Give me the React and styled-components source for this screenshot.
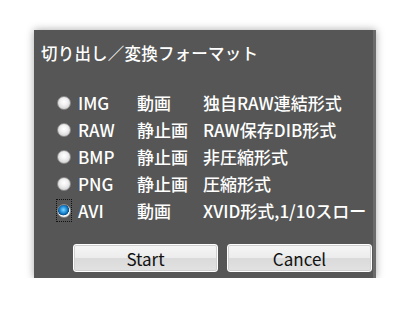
import React, { useState } from 'react';
import styled, { createGlobalStyle } from 'styled-components';

const GlobalStyle = createGlobalStyle`
  body {
    margin: 0;
    background: #ffffff;
    font-family: "Noto Sans CJK JP", "Noto Sans", sans-serif;
  }
`;

const Panel = styled.div`
  margin: 30px 0 0 34px;
  width: 342px;
  height: 248px;
  box-sizing: border-box;
  background: #555655;
  border-right: 3px solid #6a6b6a;
  box-shadow: 0 0 8px rgba(0, 0, 0, 0.35);
  padding: 13px 0 0 7px;
  display: flex;
  flex-direction: column;
`;

const Title = styled.div`
  color: #ffffff;
  font-size: 16.5px;
  font-weight: 500;
  line-height: 20px;
  letter-spacing: 0.2px;
  margin-bottom: 26px;
`;

const List = styled.div`
  display: flex;
  flex-direction: column;
  padding-left: 15px;
`;

const Row = styled.label`
  display: grid;
  grid-template-columns: 22px 59px 66px auto;
  align-items: center;
  height: 27px;
  color: #ffffff;
  font-size: 17px;
  font-weight: 500;
  white-space: nowrap;
  cursor: pointer;
`;

const RadioWrap = styled.span`
  width: 16px;
  height: 23px;
  display: flex;
  align-items: center;
  justify-content: center;
  box-sizing: border-box;
  border: 1px dotted ${p => (p.$focus ? '#111' : 'transparent')};
`;

const RadioDot = styled.span`
  flex: none;
  width: 14px;
  height: 14px;
  border-radius: 50%;
  box-sizing: border-box;
  border: 1px solid #8c8c8c;
  background: ${p =>
    p.$checked
      ? 'radial-gradient(circle at 45% 40%, #7fd6ff 0%, #1b8ad6 35%, #0a4f8a 55%, #ffffff 60%, #d8d8d8 100%)'
      : 'radial-gradient(circle at 50% 40%, #ffffff 0%, #f2f2f2 35%, #c4c4c4 100%)'};
`;

const Cell = styled.span``;

const ButtonBar = styled.div`
  margin-top: auto;
  margin-bottom: 6px;
  display: flex;
  gap: 9px;
  padding-left: 32px;
`;

const Button = styled.button`
  width: 145px;
  height: 28px;
  border: 1px solid #ffffff;
  border-radius: 3px;
  background: linear-gradient(to bottom, #f6f6f6 0%, #ececec 50%, #dadada 52%, #e2e2e2 100%);
  box-shadow: inset 0 0 0 1px #cfcfcf;
  color: #111111;
  font-family: "Noto Sans CJK JP", "Noto Sans", sans-serif;
  font-size: 17px;
  padding: 0;
  cursor: pointer;
`;

const formats = [
  { id: 'IMG', kind: '動画', desc: '独自RAW連結形式' },
  { id: 'RAW', kind: '静止画', desc: 'RAW保存DIB形式' },
  { id: 'BMP', kind: '静止画', desc: '非圧縮形式' },
  { id: 'PNG', kind: '静止画', desc: '圧縮形式' },
  { id: 'AVI', kind: '動画', desc: 'XVID形式,1/10スロー' },
];

export default function App() {
  const [selected, setSelected] = useState('AVI');

  return (
    <>
      <GlobalStyle />
      <Panel>
        <Title>切り出し／変換フォーマット</Title>
        <List>
          {formats.map(f => (
            <Row key={f.id} onClick={() => setSelected(f.id)}>
              <RadioWrap $focus={selected === f.id}>
                <RadioDot $checked={selected === f.id} />
              </RadioWrap>
              <Cell>{f.id}</Cell>
              <Cell>{f.kind}</Cell>
              <Cell>{f.desc}</Cell>
            </Row>
          ))}
        </List>
        <ButtonBar>
          <Button>Start</Button>
          <Button>Cancel</Button>
        </ButtonBar>
      </Panel>
    </>
  );
}
